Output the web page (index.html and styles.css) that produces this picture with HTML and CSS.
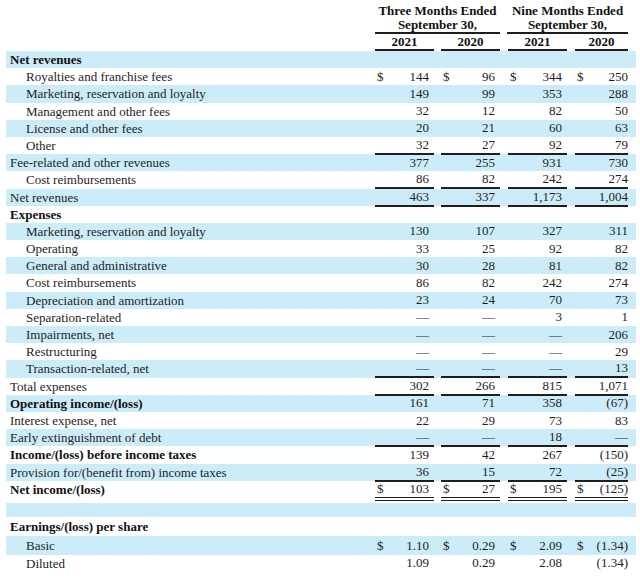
FILE: index.html
```html
<!DOCTYPE html>
<html>
<head>
<meta charset="utf-8">
<link rel="stylesheet" href="styles.css">
</head>
<body>
<div class="page">
  <div class="head">
    <div class="hlabel"></div>
    <div class="group g1">Three Months Ended<br>September 30,</div>
    <div class="group g2">Nine Months Ended<br>September 30,</div>
  </div>
  <div class="years">
    <div></div>
    <div class="yr c1">2021</div>
    <div class="yr c2">2020</div>
    <div class="yr c3">2021</div>
    <div class="yr c4">2020</div>
  </div>

  <div class="row band"><div class="lbl b">Net revenues</div></div>
  <div class="row"><div class="lbl in">Royalties and franchise fees</div><div class="v c1"><span>$</span><span>144</span></div><div class="v c2"><span>$</span><span>96</span></div><div class="v c3"><span>$</span><span>344</span></div><div class="v c4"><span>$</span><span>250</span></div></div>
  <div class="row band"><div class="lbl in">Marketing, reservation and loyalty</div><div class="v c1"><span></span><span>149</span></div><div class="v c2"><span></span><span>99</span></div><div class="v c3"><span></span><span>353</span></div><div class="v c4"><span></span><span>288</span></div></div>
  <div class="row"><div class="lbl in">Management and other fees</div><div class="v c1"><span></span><span>32</span></div><div class="v c2"><span></span><span>12</span></div><div class="v c3"><span></span><span>82</span></div><div class="v c4"><span></span><span>50</span></div></div>
  <div class="row band"><div class="lbl in">License and other fees</div><div class="v c1"><span></span><span>20</span></div><div class="v c2"><span></span><span>21</span></div><div class="v c3"><span></span><span>60</span></div><div class="v c4"><span></span><span>63</span></div></div>
  <div class="row ul"><div class="lbl in">Other</div><div class="v c1"><span></span><span>32</span></div><div class="v c2"><span></span><span>27</span></div><div class="v c3"><span></span><span>92</span></div><div class="v c4"><span></span><span>79</span></div></div>
  <div class="row band"><div class="lbl">Fee-related and other revenues</div><div class="v c1"><span></span><span>377</span></div><div class="v c2"><span></span><span>255</span></div><div class="v c3"><span></span><span>931</span></div><div class="v c4"><span></span><span>730</span></div></div>
  <div class="row ul"><div class="lbl in">Cost reimbursements</div><div class="v c1"><span></span><span>86</span></div><div class="v c2"><span></span><span>82</span></div><div class="v c3"><span></span><span>242</span></div><div class="v c4"><span></span><span>274</span></div></div>
  <div class="row band ul"><div class="lbl">Net revenues</div><div class="v c1"><span></span><span>463</span></div><div class="v c2"><span></span><span>337</span></div><div class="v c3"><span></span><span>1,173</span></div><div class="v c4"><span></span><span>1,004</span></div></div>
  <div class="row"><div class="lbl b">Expenses</div></div>
  <div class="row band"><div class="lbl in">Marketing, reservation and loyalty</div><div class="v c1"><span></span><span>130</span></div><div class="v c2"><span></span><span>107</span></div><div class="v c3"><span></span><span>327</span></div><div class="v c4"><span></span><span>311</span></div></div>
  <div class="row"><div class="lbl in">Operating</div><div class="v c1"><span></span><span>33</span></div><div class="v c2"><span></span><span>25</span></div><div class="v c3"><span></span><span>92</span></div><div class="v c4"><span></span><span>82</span></div></div>
  <div class="row band"><div class="lbl in">General and administrative</div><div class="v c1"><span></span><span>30</span></div><div class="v c2"><span></span><span>28</span></div><div class="v c3"><span></span><span>81</span></div><div class="v c4"><span></span><span>82</span></div></div>
  <div class="row"><div class="lbl in">Cost reimbursements</div><div class="v c1"><span></span><span>86</span></div><div class="v c2"><span></span><span>82</span></div><div class="v c3"><span></span><span>242</span></div><div class="v c4"><span></span><span>274</span></div></div>
  <div class="row band"><div class="lbl in">Depreciation and amortization</div><div class="v c1"><span></span><span>23</span></div><div class="v c2"><span></span><span>24</span></div><div class="v c3"><span></span><span>70</span></div><div class="v c4"><span></span><span>73</span></div></div>
  <div class="row"><div class="lbl in">Separation-related</div><div class="v c1"><span></span><span class="d">—</span></div><div class="v c2"><span></span><span class="d">—</span></div><div class="v c3"><span></span><span>3</span></div><div class="v c4"><span></span><span>1</span></div></div>
  <div class="row band"><div class="lbl in">Impairments, net</div><div class="v c1"><span></span><span class="d">—</span></div><div class="v c2"><span></span><span class="d">—</span></div><div class="v c3"><span></span><span class="d">—</span></div><div class="v c4"><span></span><span>206</span></div></div>
  <div class="row"><div class="lbl in">Restructuring</div><div class="v c1"><span></span><span class="d">—</span></div><div class="v c2"><span></span><span class="d">—</span></div><div class="v c3"><span></span><span class="d">—</span></div><div class="v c4"><span></span><span>29</span></div></div>
  <div class="row band ul"><div class="lbl in">Transaction-related, net</div><div class="v c1"><span></span><span class="d">—</span></div><div class="v c2"><span></span><span class="d">—</span></div><div class="v c3"><span></span><span class="d">—</span></div><div class="v c4"><span></span><span>13</span></div></div>
  <div class="row ul"><div class="lbl">Total expenses</div><div class="v c1"><span></span><span>302</span></div><div class="v c2"><span></span><span>266</span></div><div class="v c3"><span></span><span>815</span></div><div class="v c4"><span></span><span>1,071</span></div></div>
  <div class="row band"><div class="lbl b">Operating income/(loss)</div><div class="v c1"><span></span><span>161</span></div><div class="v c2"><span></span><span>71</span></div><div class="v c3"><span></span><span>358</span></div><div class="v c4"><span></span><span>(67)</span></div></div>
  <div class="row"><div class="lbl">Interest expense, net</div><div class="v c1"><span></span><span>22</span></div><div class="v c2"><span></span><span>29</span></div><div class="v c3"><span></span><span>73</span></div><div class="v c4"><span></span><span>83</span></div></div>
  <div class="row band ul"><div class="lbl">Early extinguishment of debt</div><div class="v c1"><span></span><span class="d">—</span></div><div class="v c2"><span></span><span class="d">—</span></div><div class="v c3"><span></span><span>18</span></div><div class="v c4"><span></span><span class="d">—</span></div></div>
  <div class="row"><div class="lbl b">Income/(loss) before income taxes</div><div class="v c1"><span></span><span>139</span></div><div class="v c2"><span></span><span>42</span></div><div class="v c3"><span></span><span>267</span></div><div class="v c4"><span></span><span>(150)</span></div></div>
  <div class="row band ul"><div class="lbl">Provision for/(benefit from) income taxes</div><div class="v c1"><span></span><span>36</span></div><div class="v c2"><span></span><span>15</span></div><div class="v c3"><span></span><span>72</span></div><div class="v c4"><span></span><span>(25)</span></div></div>
  <div class="row dul"><div class="lbl b">Net income/(loss)</div><div class="v c1"><span>$</span><span>103</span></div><div class="v c2"><span>$</span><span>27</span></div><div class="v c3"><span>$</span><span>195</span></div><div class="v c4"><span>$</span><span>(125)</span></div></div>
  <div class="row band blank"></div>
  <div class="row eps"><div class="lbl b">Earnings/(loss) per share</div></div>
  <div class="row band tall"><div class="lbl in">Basic</div><div class="v c1"><span>$</span><span>1.10</span></div><div class="v c2"><span>$</span><span>0.29</span></div><div class="v c3"><span>$</span><span>2.09</span></div><div class="v c4"><span>$</span><span>(1.34)</span></div></div>
  <div class="row"><div class="lbl in">Diluted</div><div class="v c1"><span></span><span>1.09</span></div><div class="v c2"><span></span><span>0.29</span></div><div class="v c3"><span></span><span>2.08</span></div><div class="v c4"><span></span><span>(1.34)</span></div></div>
</div>
</body>
</html>
```
FILE: styles.css
```css
html, body {
  margin: 0;
  padding: 0;
  background: #ffffff;
}
body {
  font-family: "Liberation Serif", "Times New Roman", serif;
  font-size: 13px;
  color: #1e1e1e;
}
.page {
  width: 630px;
  margin-left: 6px;
}
.head {
  display: grid;
  grid-template-columns: 369px 125px 128px;
  padding-top: 4px;
}
.group {
  font-weight: bold;
  text-align: center;
  line-height: 14px;
  border-bottom: 2px solid #1e1e1e;
  color: #111;
}
.g2 {
  margin-left: 7px;
}
.years, .row {
  display: grid;
  grid-template-columns: 369px 59px 66px 67px 61px;
}
.years {
  height: 17px;
  box-sizing: border-box;
}
.yr {
  font-weight: bold;
  text-align: center;
  line-height: 15px;
  border-bottom: 2px solid #1e1e1e;
  color: #111;
}
.row {
  height: 17.2px;
  box-sizing: border-box;
}
.band {
  background: #ccecf9;
}
.lbl {
  padding-left: 4px;
  line-height: 17px;
  white-space: nowrap;
}
.lbl.in {
  padding-left: 20px;
}
.lbl.b {
  font-weight: bold;
  color: #111;
}
.v {
  display: flex;
  justify-content: space-between;
  align-items: center;
  padding-right: 5px;
  padding-left: 2px;
  box-sizing: border-box;
}
.c2 { margin-left: 7px; }
.c3, .c4 { margin-left: 8px; }
.v.c4 { padding-right: 0; }
.yr.c4 { padding-right: 0; }
.ul .v {
  border-bottom: 2px solid #1e1e1e;
}
.dul .v {
  border-bottom: 4px double #1e1e1e;
}
.dul {
  height: 19px;
}
.blank {
  height: 14px;
  margin-top: 3px;
}
.eps {
  height: 19px;
  align-items: center;
}
.eps .lbl {
  line-height: 19px;
}
.tall {
  height: 19px;
  align-items: end;
}
.tall .lbl {
  line-height: 18px;
}
.tall .v {
  height: 18px;
}
```
